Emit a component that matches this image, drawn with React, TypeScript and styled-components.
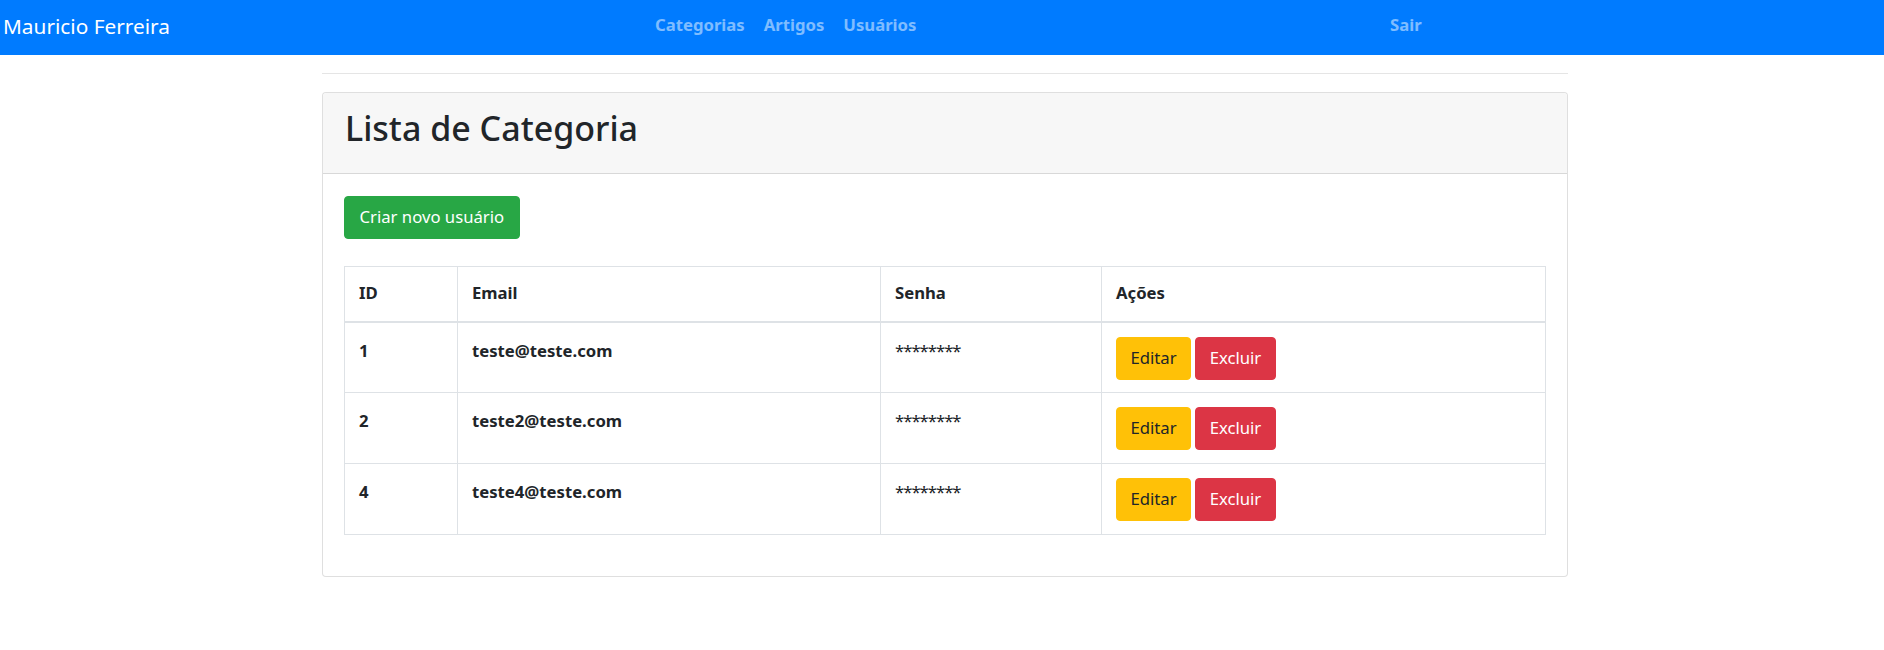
import React from "react";
import styled, { createGlobalStyle } from "styled-components";

const Global = createGlobalStyle`
  html, body { margin: 0; padding: 0; background: #fff; }
  body {
    font-family: "Noto Sans", "Open Sans", sans-serif;
    font-size: 16.7px;
    line-height: 26.4px;
    color: #212529;
  }
  * { box-sizing: border-box; }
`;

const NavBar = styled.nav`
  height: 55px;
  background: #007bff;
  display: grid;
  grid-template-columns: 651px 735px 1fr;
  align-items: center;
  padding: 0 0 4px 3px;
`;

const Brand = styled.a`
  color: #fff;
  font-size: 20.8px;
  line-height: 30px;
  text-decoration: none;
  white-space: nowrap;
`;

const NavLinks = styled.div`
  display: flex;
  gap: 19px;
  padding-left: 1px;
`;

const NavLink = styled.a`
  color: rgba(255, 255, 255, 0.5);
  font-weight: 700;
  font-size: 16.7px;
  text-decoration: none;
  white-space: nowrap;
`;

const Main = styled.main`
  padding: 0 316px 0 322px;
`;

const Rule = styled.hr`
  margin: 17.6px 0 18px;
  border: 0;
  border-top: 1px solid rgba(0, 0, 0, 0.1);
`;

const Card = styled.section`
  border: 1px solid rgba(0, 0, 0, 0.125);
  border-radius: 4px;
  background: #fff;
`;

const CardHeader = styled.header`
  background: #f7f7f7;
  border-bottom: 1px solid rgba(0, 0, 0, 0.125);
  padding: 14px 22px 14px;
  border-radius: 4px 4px 0 0;
`;

const Title = styled.h2`
  margin: 0 0 9px;
  font-size: 34px;
  line-height: 43px;
  font-weight: 500;
  color: #212529;
`;

const CardBody = styled.div`
  padding: 22px 21px 23px 21px;
  display: flex;
  flex-direction: column;
  align-items: flex-start;
`;

type Variant = "success" | "warning" | "danger";
const palette: Record<Variant, { bg: string; fg: string }> = {
  success: { bg: "#28a745", fg: "#fff" },
  warning: { bg: "#ffc107", fg: "#212529" },
  danger: { bg: "#dc3545", fg: "#fff" },
};

const Button = styled.button<{ $variant: Variant; $compact?: boolean }>`
  font-family: inherit;
  font-size: 16.7px;
  line-height: 26.4px;
  height: 43px;
  padding: 0 ${(p) => (p.$compact ? "13.5px" : "14.5px")};
  border: 1px solid ${(p) => palette[p.$variant].bg};
  border-radius: 4px;
  background: ${(p) => palette[p.$variant].bg};
  color: ${(p) => palette[p.$variant].fg};
  cursor: pointer;
  white-space: nowrap;
`;

const Table = styled.table`
  width: 1202px;
  margin: 27px 0 17.6px;
  border-collapse: collapse;
  table-layout: fixed;
`;

const Th = styled.th`
  text-align: left;
  font-weight: 700;
  padding: 13.5px 14px 14px;
  border: 1px solid #dee2e6;
  border-bottom: 2px solid #dee2e6;
  vertical-align: bottom;
`;

const Td = styled.td<{ $bold?: boolean }>`
  padding: 15px 14px 12px;
  border: 1px solid #dee2e6;
  vertical-align: top;
  font-weight: ${(p) => (p.$bold ? 700 : 400)};
  height: 71px;
`;

const Masked = styled.span`
  letter-spacing: -1px;
`;

const Actions = styled.div`
  display: flex;
  gap: 4px;
  margin-top: -1px;
`;

const users = [
  { id: 1, email: "teste@teste.com" },
  { id: 2, email: "teste2@teste.com" },
  { id: 4, email: "teste4@teste.com" },
];

export default function App() {
  return (
    <>
      <Global />
      <NavBar>
        <Brand href="#">Mauricio Ferreira</Brand>
        <NavLinks>
          <NavLink href="#">Categorias</NavLink>
          <NavLink href="#">Artigos</NavLink>
          <NavLink href="#">Usuários</NavLink>
        </NavLinks>
        <NavLinks>
          <NavLink href="#">Sair</NavLink>
        </NavLinks>
      </NavBar>
      <Main>
        <Rule />
        <Card>
          <CardHeader>
            <Title>Lista de Categoria</Title>
          </CardHeader>
          <CardBody>
            <Button $variant="success">Criar novo usuário</Button>
            <Table>
              <colgroup>
                <col style={{ width: 113 }} />
                <col style={{ width: 423 }} />
                <col style={{ width: 221 }} />
                <col />
              </colgroup>
              <thead>
                <tr>
                  <Th>ID</Th>
                  <Th>Email</Th>
                  <Th>Senha</Th>
                  <Th>Ações</Th>
                </tr>
              </thead>
              <tbody>
                {users.map((u) => (
                  <tr key={u.id}>
                    <Td $bold>{u.id}</Td>
                    <Td $bold>{u.email}</Td>
                    <Td>
                      <Masked>********</Masked>
                    </Td>
                    <Td>
                      <Actions>
                        <Button $variant="warning" $compact>
                          Editar
                        </Button>
                        <Button $variant="danger" $compact>
                          Excluir
                        </Button>
                      </Actions>
                    </Td>
                  </tr>
                ))}
              </tbody>
            </Table>
          </CardBody>
        </Card>
      </Main>
    </>
  );
}
